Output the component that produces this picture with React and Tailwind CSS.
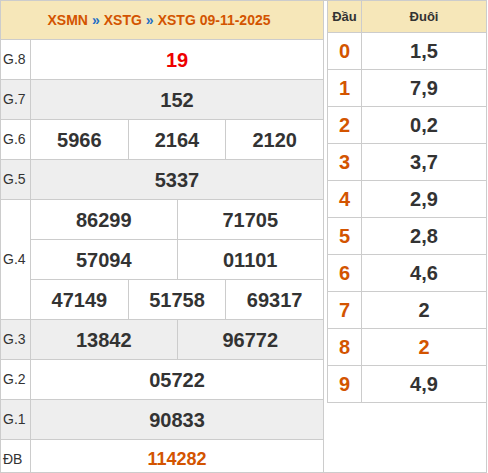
import React from "react";

const FONT = { fontFamily: '"Liberation Sans", Arial, sans-serif' };

function Cells({ nums, color = "text-[#333]", size = "text-[20px]" }) {
  return (
    <div className="flex flex-1 h-full">
      {nums.map((n, i) => (
        <div
          key={i}
          className={`flex-1 flex items-center justify-center font-bold ${size} ${color} ${i > 0 ? "border-l border-[#ccc]" : ""}`}
        >
          {n}
        </div>
      ))}
    </div>
  );
}

function Row({ label, nums, gray, color, size }) {
  return (
    <div className={`flex h-[40px] shrink-0 border-b border-[#ccc] ${gray ? "bg-[#eeeeee]" : "bg-white"}`}>
      <div className="w-[30px] shrink-0 border-r border-[#ccc] flex items-center pl-[2px] text-[14px] text-[#333]">
        {label}
      </div>
      <Cells nums={nums} color={color} size={size} />
    </div>
  );
}

const dauduoi = [
  ["0", "1,5"],
  ["1", "7,9"],
  ["2", "0,2"],
  ["3", "3,7"],
  ["4", "2,9"],
  ["5", "2,8"],
  ["6", "4,6"],
  ["7", "2"],
  ["8", "2", true],
  ["9", "4,9"],
];

export default function App() {
  return (
    <div
      className="w-[487px] h-[473px] border border-[#ccc] overflow-hidden flex items-start bg-white"
      style={FONT}
    >
      <div className="w-[323px] shrink-0 border-r border-[#ccc] flex flex-col">
        <div className="h-[39px] shrink-0 border-b border-[#ccc] bg-[#f6e7b9] flex items-center justify-center pr-[6px] font-bold text-[14px] text-[#d35400]">
          <span>XSMN</span>
          <span className="text-[#1f6fc5] mx-[4px]">»</span>
          <span>XSTG</span>
          <span className="text-[#1f6fc5] mx-[4px]">»</span>
          <span>XSTG 09-11-2025</span>
        </div>
        <Row label="G.8" nums={["19"]} color="text-[#ee0000]" />
        <Row label="G.7" nums={["152"]} gray />
        <Row label="G.6" nums={["5966", "2164", "2120"]} />
        <Row label="G.5" nums={["5337"]} gray />
        <div className="flex shrink-0 bg-white">
          <div className="w-[30px] shrink-0 border-r border-b border-[#ccc] flex items-center pl-[2px] text-[14px] text-[#333]">
            G.4
          </div>
          <div className="flex-1 flex flex-col">
            <div className="h-[40px] border-b border-[#ccc] flex">
              <Cells nums={["86299", "71705"]} />
            </div>
            <div className="h-[40px] border-b border-[#ccc] flex">
              <Cells nums={["57094", "01101"]} />
            </div>
            <div className="h-[40px] border-b border-[#ccc] flex">
              <Cells nums={["47149", "51758", "69317"]} />
            </div>
          </div>
        </div>
        <Row label="G.3" nums={["13842", "96772"]} gray />
        <Row label="G.2" nums={["05722"]} />
        <Row label="G.1" nums={["90833"]} gray />
        <Row label="ĐB" nums={["114282"]} color="text-[#d35400]" size="text-[18px]" />
      </div>
      <div className="ml-[3px] flex-1 border-l border-[#ccc] flex flex-col">
        <div className="h-[32px] shrink-0 border-b border-[#ccc] bg-[#f6e7b9] flex font-bold text-[13px] text-[#333]">
          <div className="w-[34px] shrink-0 border-r border-[#ccc] flex items-center justify-center">Đầu</div>
          <div className="flex-1 flex items-center justify-center">Đuôi</div>
        </div>
        {dauduoi.map(([d, v, hl]) => (
          <div key={d} className="h-[37px] shrink-0 border-b border-[#ccc] flex font-bold text-[20px]">
            <div className="w-[34px] shrink-0 border-r border-[#ccc] flex items-center justify-center text-[#d35400]">
              {d}
            </div>
            <div className={`flex-1 flex items-center justify-center ${hl ? "text-[#d35400]" : "text-[#333]"}`}>
              {v}
            </div>
          </div>
        ))}
      </div>
    </div>
  );
}
